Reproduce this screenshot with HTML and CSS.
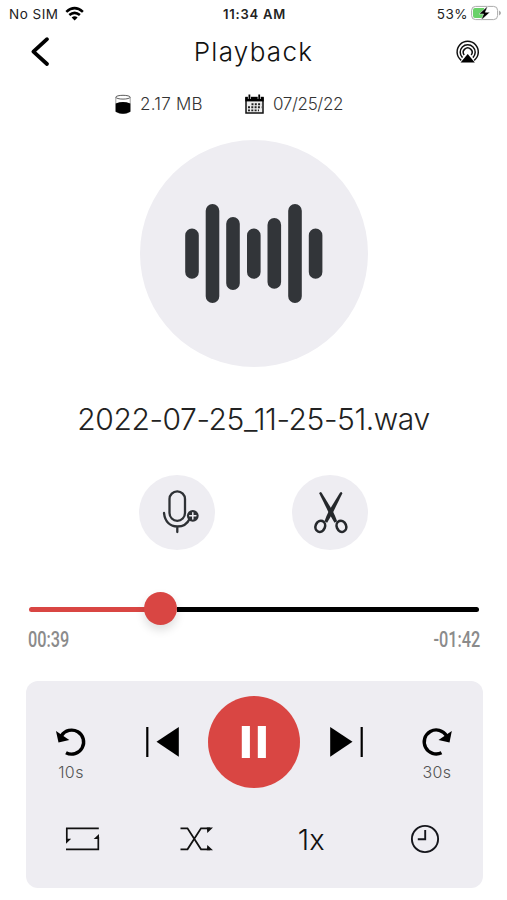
FILE: index.html
```html
<!DOCTYPE html>
<html lang="en">
<head>
<meta charset="utf-8">
<meta name="viewport" content="width=device-width, initial-scale=1">
<title>Playback</title>
<link rel="stylesheet" href="styles.css">
</head>
<body>
<main class="screen">
  <div class="status">
    <div class="carrier"><span class="sim">No SIM</span>
      <svg width="20" height="16" viewBox="64 5 20 16" fill="none" stroke="#000" stroke-width="2.6"><path d="M65.3 10.9Q73.6 3.5 81.9 10.9M68.3 14.1Q73.6 9.5 78.9 14.1"/><path d="M70.6 16.5Q73.6 14 76.6 16.5L73.6 19.4Z" fill="#000" stroke="none"/></svg>
    </div>
    <span class="clock">11:34 AM</span>
    <div class="power"><span class="percent">53%</span>
      <svg width="32" height="18" viewBox="470 5 32 18"><rect x="471.6" y="6.4" width="26" height="13.2" rx="4" fill="#fff" stroke="#aaa"/><path d="M475 8H484V18H475Q473 18 473 16V10Q473 8 475 8Z" fill="#69d169"/><path d="M499 10.5Q503 13 499 15.5Z" fill="#aaa"/><path d="M487.8 6L479 14H483.6L481 20.3L490 12.2H485.3Z" fill="#000" stroke="#fff" stroke-width=".5"/></svg>
    </div>
  </div>
  <header class="header">
    <svg width="24" height="34" viewBox="28 35 24 34" fill="none" stroke="#000" stroke-width="3.8" stroke-linecap="round" stroke-linejoin="round"><path d="M47 39.2L33.4 51.7L47 64"/></svg>
    <h1 class="title">Playback</h1>
    <svg width="26" height="26" viewBox="455 39 26 26"><g fill="none" stroke="#111" stroke-width="1.5"><path d="M461.2 60.3A10.6 10.6 0 1 1 474.2 60.3"/><path d="M462.5 57.6A7.5 7.5 0 1 1 472.9 57.6"/><path d="M464.2 55A4.4 4.4 0 1 1 471.2 55"/></g><path d="M467.7 54L474.8 62.6H460.6Z" fill="#000"/></svg>
  </header>
  <div class="meta">
    <svg class="disk" width="16" height="20" viewBox="115 93 16 20"><path d="M115.8 96.5V110.5Q123 115 130.2 110.5V96.5" fill="#fff" stroke="#777" stroke-width=".7"/><ellipse cx="123" cy="96.2" rx="7.2" ry="1.9" fill="#fff" stroke="#333" stroke-width=".8"/><path d="M115.7 102.4Q123 99.8 130.3 102.4V110.7Q123 114.6 115.7 110.7Z" fill="#000"/></svg>
    <span class="size">2.17 MB</span>
    <svg class="calendar" width="20" height="20" viewBox="244 93 20 20"><rect x="246" y="97" width="17" height="15" fill="#eee" stroke="#111" stroke-width="1.5"/><path d="M245.3 95.8H263.7V100.4H245.3Z" fill="#000"/><path d="M249.4 94V98M259.2 94V98" stroke="#fff" stroke-width="3"/><path d="M249.4 93.5V98M259.2 93.5V98" stroke="#000" stroke-width="1.8"/><path d="M251.5 103.2H261.5M248 106.3H261.5M248 109.4H259" stroke="#222" stroke-width="1.9" stroke-dasharray="2 1.3"/></svg>
    <span class="date">07/25/22</span>
  </div>
  <div class="artwork">
    <svg width="140" height="101" viewBox="184 203 140 101" stroke="#323539" stroke-width="13.6" stroke-linecap="round"><path d="M192 235.2V272M212.5 210.8V296.2M233 223.8V283.2M253.8 235.2V272M274.3 224.9V282M295 210.8V296.2M315.6 235.2V272"/></svg>
  </div>
  <h2 class="filename">2022-07-25_11-25-51.wav</h2>
  <div class="tools">
    <button class="tool" aria-label="Add recording"><svg width="75" height="75" viewBox="140 475 75 75" fill="none" stroke="#2e3135" stroke-width="2.3" stroke-linecap="round"><rect x="169.5" y="491.3" width="15.5" height="29.5" rx="7.75"/><path d="M164 513C165 522 170.5 526.5 177.3 526.5C183 526.5 187.6 523.3 189.5 519M177.3 527V532"/><circle cx="192.8" cy="515.8" r="5.9" fill="#2e3135" stroke="none"/><path d="M189.7 515.8H195.9M192.8 512.7V518.9" stroke="#eeedf2" stroke-width="1.5"/></svg></button>
    <button class="tool" aria-label="Trim"><svg width="75" height="75" viewBox="292.5 475 75 75" fill="none" stroke="#25282c"><path d="M318.8 493.5Q319.2 491 321 492.6L332 510.5Q334.8 516 336.6 521.2L334 522.8L328.6 513.4Z" fill="#25282c" stroke="none"/><path d="M341.8 493.5Q341.4 491 339.6 492.6L328.6 510.5Q325.8 516 324 521.2L326.6 522.8L332 513.4Z" fill="#25282c" stroke="none"/><ellipse cx="319.8" cy="526.3" rx="4.7" ry="5.7" transform="rotate(22 319.8 526.3)" stroke-width="2.6"/><ellipse cx="340.9" cy="526.3" rx="4.7" ry="5.7" transform="rotate(-22 340.9 526.3)" stroke-width="2.6"/></svg></button>
  </div>
  <div class="slider"><div class="elapsed"></div><div class="thumb"></div><div class="remaining"></div></div>
  <div class="times"><span class="time">00:39</span><span class="time time-left">-01:42</span></div>
  <section class="panel">
    <div class="transport">
      <div class="skip"><svg width="34" height="34" viewBox="54 724 34 34"><path d="M61.5 735.7A12 12 0 1 1 66 752.7" fill="none" stroke="#000" stroke-width="3.4"/><path d="M56 731L69.3 740L58.5 742.5Z"/></svg><span class="skip-label">10s</span></div>
      <svg class="previous" width="36" height="34" viewBox="145 725 36 34"><path d="M147.3 727V757" stroke="#000" stroke-width="2.2"/><path d="M178.8 727V756.7L156.5 741.8Z"/></svg>
      <button class="pause" aria-label="Pause"><svg width="28" height="34" viewBox="240 725 28 34" fill="#fff"><path d="M241.8 726H249.9V758H241.8ZM257.8 726H265.9V758H257.8Z"/></svg></button>
      <svg class="next" width="36" height="34" viewBox="327 725 36 34"><path d="M360.7 727V757" stroke="#000" stroke-width="2.2"/><path d="M329.2 727V756.7L351.5 741.8Z"/></svg>
      <div class="skip"><svg width="34" height="34" viewBox="420 724 34 34"><path d="M446.5 735.7A12 12 0 1 0 441.5 752.7" fill="none" stroke="#000" stroke-width="3.4"/><path d="M451.8 731L438.5 740L449.5 742.5Z"/></svg><span class="skip-label">30s</span></div>
    </div>
    <div class="modes">
      <svg width="36" height="28" viewBox="65 825 36 28" fill="none" stroke="#111" stroke-width="1.7"><path d="M98.8 828.3H66.8V840M66 849.3H98.3V837"/><path d="M66 843.7V838.8H71.2ZM99 834V839H93.7Z" fill="#111" stroke="none"/></svg>
      <svg width="36" height="28" viewBox="179 825 36 28" fill="none" stroke="#111" stroke-width="1.8"><path d="M180.5 828.3H187.5L201 849.3H210M180.5 849.3H187.5L201 828.3H210"/><path d="M206.8 827.5H213L207.3 833ZM207.3 845L213 850.2H206.8Z" fill="#111" stroke="none"/></svg>
      <span class="speed">1x</span>
      <svg width="30" height="30" viewBox="410 824 30 30" fill="none" stroke="#15161c" stroke-width="1.9"><circle cx="425" cy="839" r="13.1"/><path d="M425.2 830V839.3H417.8"/></svg>
    </div>
  </section>
</main>
</body>
</html>
```
FILE: styles.css
```css
* { box-sizing: border-box; }
body { margin: 0; background: #fff; color: #111; font-family: Inter, "Open Sans", sans-serif; }
svg { display: block; flex: none; }
button { border: 0; padding: 0; }
h1, h2 { margin: 0; }
.screen { width: 507px; height: 900px; overflow: hidden; }
.status { height: 27px; display: grid; grid-template-columns: 1fr auto 1fr; align-items: center; padding: 0 5px 0 9px; font-size: 13px; color: #222; }
.carrier, .power { display: flex; align-items: center; }
.carrier { gap: 6px; }
.sim { font-size: 13.5px; letter-spacing: .5px; }
.clock { font-weight: 600; letter-spacing: .75px; margin-left: -2px; }
.power { justify-content: flex-end; gap: 2px; }
.percent { font-size: 13.5px; letter-spacing: .5px; }
.header { height: 50px; display: flex; align-items: center; justify-content: space-between; padding: 0 26px 0 28px; }
.title { font-size: 26px; line-height: 32px; font-weight: 350; letter-spacing: 1.3px; color: #111; }
.meta { height: 53px; display: flex; align-items: center; padding-left: 115px; font-size: 17px; font-weight: 300; color: #333; }
.size { width: 64px; margin-left: 9px; white-space: nowrap; letter-spacing: .25px; }
.calendar { margin-left: 40px; }
.date { margin-left: 9px; letter-spacing: -.35px; }
.artwork { width: 228px; height: 227px; margin: 10px auto 0; border-radius: 50%; background: #eeedf2; display: grid; place-items: center; }
.filename { height: 40px; margin-top: 32px; display: flex; align-items: center; justify-content: center; white-space: nowrap; font-size: 30px; font-weight: 300; letter-spacing: -.43px; color: #222; }
.tools { margin-top: 36px; display: flex; justify-content: center; gap: 77px; }
.tool { width: 76px; height: 75px; border-radius: 50%; background: #eeedf2; display: grid; place-items: center; }
.slider { height: 34px; margin: 41px 28px 0 29px; display: flex; align-items: center; }
.elapsed, .remaining { height: 5px; margin-top: 2px; }
.elapsed { width: 116px; background: #d94643; border-radius: 3px 0 0 3px; }
.thumb { width: 33px; height: 33px; flex: none; border-radius: 50%; background: #d94643; box-shadow: 0 5px 10px #0002; margin-left: -1px; }
.remaining { flex: 1; background: #000; border-radius: 0 3px 3px 0; }
.times { height: 28px; display: flex; align-items: center; justify-content: space-between; padding: 0 27px 0 28px; }
.time { font-family: Roboto, sans-serif; font-size: 22px; font-weight: 500; color: #8b8b8b; transform: scaleX(.74); transform-origin: left; }
.time-left { transform-origin: right; }
.panel { width: 457px; height: 207px; margin: 28px 0 0 25.5px; border-radius: 12px; background: #eeedf2; }
.transport { height: 121px; display: grid; grid-template-columns: 91px 92px 91px 92px 91px; align-items: center; justify-items: center; }
.skip { height: 60px; margin-top: 24px; display: flex; flex-direction: column; align-items: center; }
.skip-label { font-size: 16px; line-height: 16px; margin-top: 6px; color: #555; font-weight: 300; letter-spacing: .4px; }
.pause { width: 92px; height: 92px; border-radius: 50%; background: #d94643; display: grid; place-items: center; }
.modes { height: 74px; display: grid; grid-template-columns: repeat(4, 114.25px); align-items: center; justify-items: center; }
.speed { font-size: 29px; font-weight: 300; color: #111; }
```
